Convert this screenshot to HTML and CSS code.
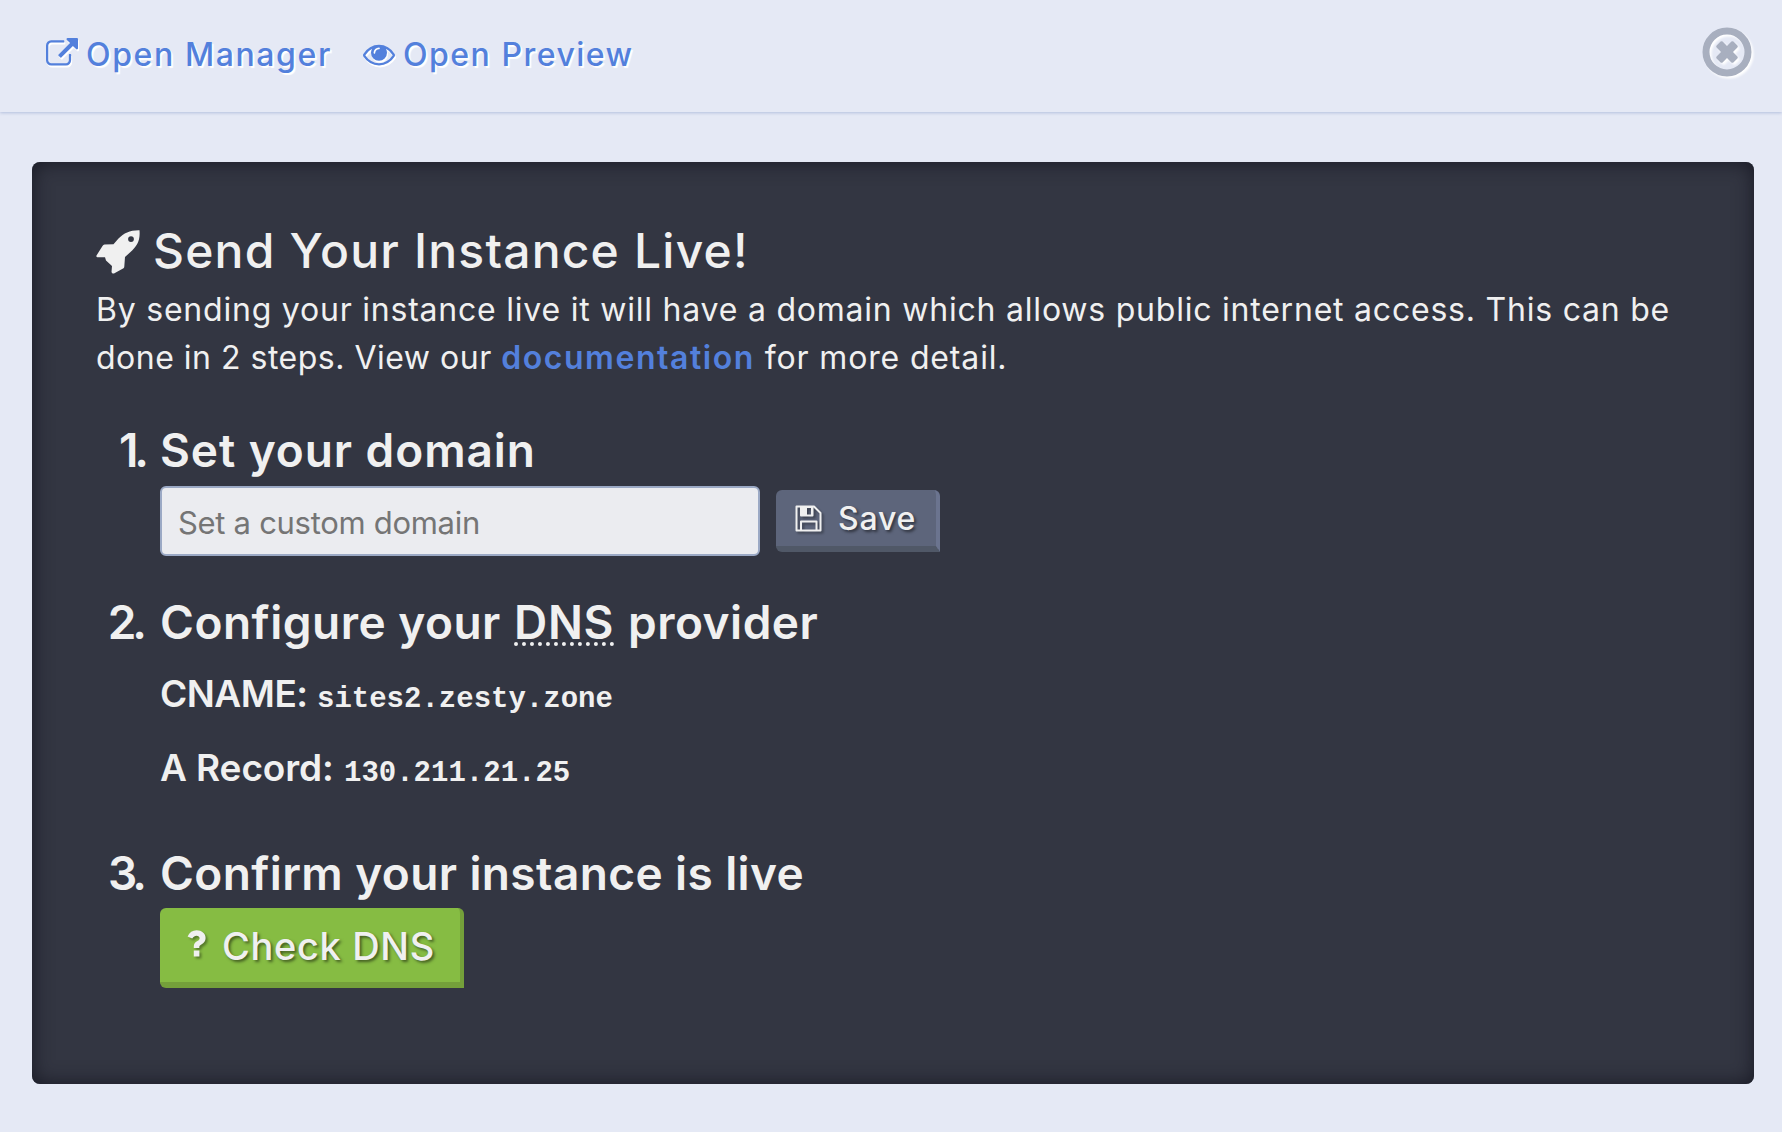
FILE: index.html
```
<!DOCTYPE html>
<html lang="en">
<head>
<meta charset="utf-8">
<title>Send Your Instance Live</title>
<link rel="stylesheet" href="styles.css">
</head>
<body>
<header class="topbar">
  <nav class="links">
    <a class="link manager"><svg class="icon" viewBox="0 0 1792 1792"><path d="M1408 928v320q0 119-84.500 203.500t-203.500 84.500h-832q-119 0-203.500-84.500t-84.500-203.500v-832q0-119 84.500-203.500t203.500-84.500h704q14 0 23 9t9 23v64q0 14-9 23t-23 9h-704q-66 0-113 47t-47 113v832q0 66 47 113t113 47h832q66 0 113-47t47-113v-320q0-14 9-23t23-9h64q14 0 23 9t9 23zM1792 64v512q0 26-19 45t-45 19-45-19l-176-176-652 652q-10 10-23 10t-23-10l-114-114q-10-10-10-23t10-23l652-652-176-176q-19-19-19-45t19-45 45-19h512q26 0 45 19t19 45z"/></svg><span>Open Manager</span></a>
    <a class="link preview"><svg class="icon" viewBox="0 0 1792 1792"><path d="M1664 960q-152-236-381-353 61 104 61 225 0 185-131.500 316.500t-316.500 131.500-316.500-131.500-131.500-316.500q0-121 61-225-229 117-381 353 133 205 333.500 326.500t434.500 121.500 434.500-121.500 333.500-326.500zM944 576q0-20-14-34t-34-14q-125 0-214.500 89.500t-89.500 214.500q0 20 14 34t34 14 34-14 14-34q0-86 61-147t147-61q20 0 34-14t14-34zM1792 960q0 34-20 69-140 230-376.500 368.500t-499.500 138.500-499.500-139-376.500-368q-20-35-20-69t20-69q140-229 376.500-368t499.500-139 499.500 139 376.500 368q20 35 20 69z"/></svg><span>Open Preview</span></a>
  </nav>
  <svg class="close" viewBox="0 0 50 50"><circle cx="25" cy="25" r="21" fill="none" stroke="#a8afbf" stroke-width="7"/><path d="M18.600 14.600a1.500 1.500 0 0 1 2 0L25 19l4.400-4.400a1.500 1.500 0 0 1 2 0l4 4a1.500 1.500 0 0 1 0 2L31 25l4.400 4.400a1.500 1.500 0 0 1 0 2l-4 4a1.500 1.500 0 0 1-2 0L25 31l-4.400 4.400a1.500 1.500 0 0 1-2 0l-4-4a1.500 1.500 0 0 1 0-2L19 25l-4.400-4.400a1.500 1.500 0 0 1 0-2z" fill="#a8afbf"/></svg>
</header>
<main class="card">
  <h1 class="title"><svg class="rocket" viewBox="0 0 46 44"><path fill-rule="evenodd" d="M43.500.2C34 0 28 3 22.500 8.500L17.500 14.200 8.500 14.600Q7.200 14.700 6.500 16L.5 25.500Q0 27 1.500 27.300L9 27.200 10 30.500 16 36 15.500 42Q16 44 18 43.500L27.500 38.300Q28.300 37.700 28.300 36.500L29 27 34.500 22C40.500 16.500 44.500 11 43.500.2zM35 6.200a2.900 2.900 0 1 1 0 5.800 2.900 2.900 0 0 1 0-5.800z"/></svg><span>Send Your Instance Live!</span></h1>
  <p class="intro">By sending your instance live it will have a domain which allows public internet access. This can be<br><span class="second">done in 2 steps. View our </span><a class="doc">documentation</a><span class="tail"> for more detail.</span></p>
  <ol class="steps">
    <li class="step">
      <h2 class="step-title"><span class="num one">1.</span><span class="set">Set your domain</span></h2>
      <div class="form">
        <input class="domain" type="text" placeholder="Set a custom domain">
        <button class="btn save"><svg class="disk" viewBox="0 0 27 27"><path d="M1.500 1.500H19L25.500 8v17.500h-24zM6 25v-8.500h15.500V25" fill="none" stroke="#f0f0f0" stroke-width="2" stroke-linejoin="round"/><path fill-rule="evenodd" d="M5 1h13.500v9.500q0 1-1 1H6q-1 0-1-1zm7 2v6.500h4V3z" fill="#f0f0f0"/></svg><span>Save</span></button>
      </div>
    </li>
    <li class="step second-step">
      <h2 class="step-title"><span class="num">2.</span><span class="conf">Configure your </span><abbr class="dns">DNS</abbr><span class="prov">provider</span></h2>
      <p class="record cname"><span>CNAME:</span><code>sites2.zesty.zone</code></p>
      <p class="record arec"><span>A Record:</span><code>130.211.21.25</code></p>
    </li>
    <li class="step third-step">
      <h2 class="step-title"><span class="num">3.</span><span class="confirm">Confirm your instance is live</span></h2>
      <button class="btn check"><svg class="question" viewBox="0 0 19 27"><path d="M.6 6.500C2.500 2.500 5.500.3 9.600.3c5 0 9 3.200 9 7.700 0 3-1.500 4.900-4.300 6.600-1.600 1-2 1.600-2 2.700v.7H6.800v-1.500c0-2.500 1.200-4 3.600-5.400 1.600-1 2.200-1.700 2.200-2.900 0-1.500-1.300-2.500-3.100-2.500-1.700 0-2.800.8-4.300 2.700zM6.800 20.500h5.600V26.500H6.800z" fill="#f0f0f0"/></svg><span>Check DNS</span></button>
    </li>
  </ol>
</main>
</body>
</html>
```
FILE: styles.css
```
* { box-sizing: border-box; }

body {
  margin: 0;
  min-height: 1132px;
  background: #e5e9f5;
  color: #f0f0f0;
  font-family: "Inter", sans-serif;
}

.topbar {
  display: flex;
  justify-content: space-between;
  align-items: flex-start;
  height: 112px;
  padding: 27px 30px 0 46px;
  box-shadow: 0 1px 3px #b3bfdd;
}

.links { display: flex; padding-top: 4px; }

.link {
  display: flex;
  align-items: flex-start;
  color: #5380dc;
  font-size: 32px;
  font-weight: 500;
  line-height: 48px;
  text-shadow: 2px 2px 1px #fff;
  white-space: nowrap;
}

.link .icon {
  width: 32px;
  height: 32px;
  margin-top: 7px;
  fill: currentColor;
  filter: drop-shadow(1px 2px 0 #fff);
}

.manager { width: 317px; gap: 8px; letter-spacing: 1.6px; }
.preview { gap: 8px; letter-spacing: 1.5px; }
.close { width: 50px; height: 50px; filter: drop-shadow(2px 2px 1px #fff); }

.card {
  height: 922px;
  margin: 50px 28px 0 32px;
  padding: 61px 64px 0;
  background: #333642;
  border-radius: 8px;
  box-shadow: inset 0 0 20px #181924;
}

.title {
  display: flex;
  gap: 11px;
  margin: 0 0 7px;
  font-size: 48px;
  font-weight: 500;
  line-height: 56px;
  letter-spacing: 1.2px;
  white-space: nowrap;
}

.rocket { width: 46px; height: 44px; margin-top: 7px; fill: #f0f0f0; }

.intro {
  margin: 0;
  font-size: 32px;
  line-height: 48px;
  letter-spacing: 0.78px;
  white-space: nowrap;
}

.second { letter-spacing: 0.5px; }
.doc { color: #5380dc; font-weight: 600; letter-spacing: 1.55px; }
.tail { letter-spacing: 0.85px; }

.steps { margin: 40px 0 0; padding: 0 0 0 64px; list-style: none; }

.step-title {
  display: flex;
  margin: 0;
  font-size: 46px;
  font-weight: 600;
  line-height: 56px;
  white-space: pre;
}

.num {
  width: 64px;
  margin-left: -64px;
  padding-right: 17px;
  letter-spacing: -4px;
  text-align: right;
}
.one { padding-right: 15px; }
.set { letter-spacing: 0.93px; }
.conf { width: 354px; letter-spacing: 0.5px; }
.dns {
  width: 100px;
  height: 52px;
  margin-right: 14px;
  border-bottom: 4px dotted #f0f0f0;
  letter-spacing: 0.7px;
  text-decoration: none;
}
.prov { letter-spacing: 0.5px; }
.confirm { letter-spacing: 0.4px; }

.form { display: flex; align-items: flex-start; gap: 16px; margin-top: 8px; }

.domain {
  width: 600px;
  height: 70px;
  padding: 2px 16px 0;
  border: 2px solid #9ba9c5;
  border-radius: 6px;
  background: #ebecf0;
  font: 400 31px "Inter", sans-serif;
  letter-spacing: -0.3px;
}
.domain::placeholder { color: #757575; opacity: 1; }

.btn {
  display: flex;
  align-items: flex-start;
  border: 0 solid;
  border-radius: 6px 6px 0 6px;
  color: #f0f0f0;
  font-family: inherit;
  font-weight: 500;
  line-height: 48px;
  text-shadow: 2px 2px 3px rgba(0, 0, 0, 0.5);
  white-space: nowrap;
}
.btn svg { filter: drop-shadow(2px 2px 1px rgba(0, 0, 0, 0.35)); }

.save {
  width: 164px;
  height: 62px;
  margin-top: 4px;
  padding: 5px 0 0 19px;
  gap: 16px;
  border-width: 0 4px 6px 0;
  border-color: #505867 #6b748f #505867 #505867;
  background: #5d657b;
  font-size: 32px;
  letter-spacing: 0.8px;
}
.disk { width: 27px; height: 27px; margin-top: 10px; }

.second-step { margin-top: 38px; }
.record {
  display: flex;
  align-items: baseline;
  height: 48px;
  margin: 0;
  font-size: 37px;
  font-weight: 600;
  line-height: 48px;
}
.record code { font: 700 29px/40px "Liberation Mono", monospace; }
.cname { margin-top: 20px; }
.cname span { width: 157px; letter-spacing: -0.5px; }
.arec { margin-top: 26px; }
.arec span { width: 184px; letter-spacing: -0.1px; }

.third-step { margin-top: 53px; }
.check {
  width: 304px;
  height: 80px;
  margin-top: 7px;
  padding: 14px 0 0 27px;
  gap: 16px;
  border-width: 0 4px 6px 0;
  border-color: #74a03a;
  background: #86bc43;
  font-size: 38px;
  letter-spacing: 0.65px;
}
.question { width: 19px; height: 27px; margin-top: 8px; }
```
